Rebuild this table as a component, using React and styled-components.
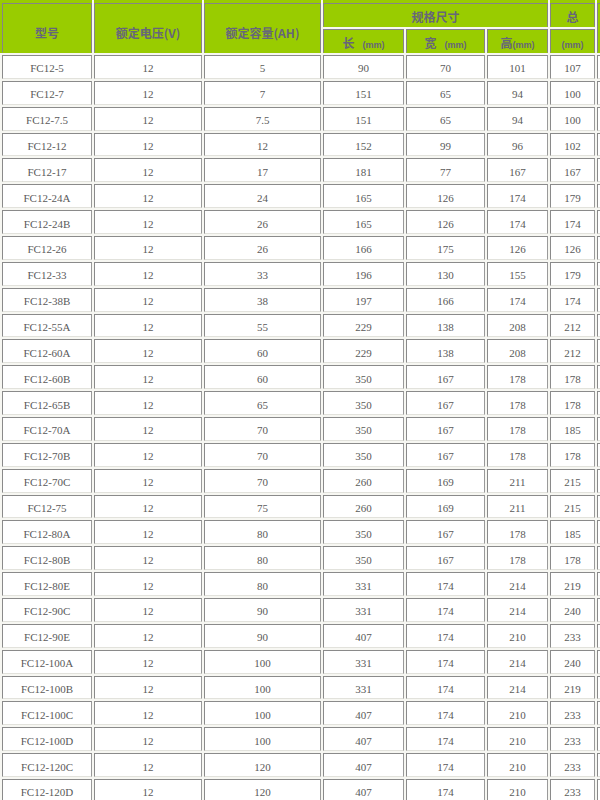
import React from "react";
import styled, { createGlobalStyle, css } from "styled-components";

const Global = createGlobalStyle`
  html, body {
    margin: 0;
    padding: 0;
    overflow: hidden;
    background: #f7f7f2;
  }
  body {
    font-family: "Liberation Serif", "Noto Sans CJK SC", serif;
  }
`;

const GREEN = "#99cc00";

const Table = styled.table`
  table-layout: fixed;
  width: 659px;
  margin: 1px 0 0 0;
  border-collapse: separate;
  border-spacing: 2px;
  background: #f7f7f2;
`;

const HeadRow = styled.tr`
  height: ${(p) => p.$h}px;
`;

const Row = styled.tr`
  height: 23.86px;
`;

const Th = styled.th`
  background: ${GREEN};
  border: 1px solid #858585;
  border-bottom-color: ${GREEN};
  padding: ${(p) => (p.$tall ? "8px" : "3px")} 0 0 0;
  text-align: center;
  vertical-align: middle;
  font-family: "Noto Sans CJK SC", "Liberation Sans", sans-serif;
  font-size: 12px;
  font-weight: 700;
  color: #66667a;
  white-space: nowrap;
  overflow: hidden;
  ${(p) =>
    p.$top &&
    css`
      box-shadow: 0 -3px 0 ${GREEN};
    `}
  ${(p) =>
    p.$first &&
    css`
      box-shadow: 0 -3px 0 ${GREEN}, -2px 0 0 ${GREEN}, -2px -3px 0 ${GREEN};
    `}
`;

const Unit = styled.span`
  font-family: "Liberation Sans", sans-serif;
  font-size: 9px;
  font-weight: 700;
  margin-left: ${(p) => p.$gap || 0}px;
`;

const Td = styled.td`
  border: 1px solid #8a8a8a;
  border-right-color: #9a9a9a;
  border-bottom-color: #e2e2dc;
  background: #ffffff;
  padding: 4px 0 0 0;
  text-align: center;
  vertical-align: middle;
  font-family: "Liberation Serif", serif;
  font-size: 11px;
  line-height: 13px;
  color: #5a5a5a;
  white-space: nowrap;
  overflow: hidden;
`;

const widths = [90, 108, 117, 81, 79, 61, 45, 60];

const rows = [
  ["FC12-5", 12, 5, 90, 70, 101, 107],
  ["FC12-7", 12, 7, 151, 65, 94, 100],
  ["FC12-7.5", 12, "7.5", 151, 65, 94, 100],
  ["FC12-12", 12, 12, 152, 99, 96, 102],
  ["FC12-17", 12, 17, 181, 77, 167, 167],
  ["FC12-24A", 12, 24, 165, 126, 174, 179],
  ["FC12-24B", 12, 26, 165, 126, 174, 174],
  ["FC12-26", 12, 26, 166, 175, 126, 126],
  ["FC12-33", 12, 33, 196, 130, 155, 179],
  ["FC12-38B", 12, 38, 197, 166, 174, 174],
  ["FC12-55A", 12, 55, 229, 138, 208, 212],
  ["FC12-60A", 12, 60, 229, 138, 208, 212],
  ["FC12-60B", 12, 60, 350, 167, 178, 178],
  ["FC12-65B", 12, 65, 350, 167, 178, 178],
  ["FC12-70A", 12, 70, 350, 167, 178, 185],
  ["FC12-70B", 12, 70, 350, 167, 178, 178],
  ["FC12-70C", 12, 70, 260, 169, 211, 215],
  ["FC12-75", 12, 75, 260, 169, 211, 215],
  ["FC12-80A", 12, 80, 350, 167, 178, 185],
  ["FC12-80B", 12, 80, 350, 167, 178, 178],
  ["FC12-80E", 12, 80, 331, 174, 214, 219],
  ["FC12-90C", 12, 90, 331, 174, 214, 240],
  ["FC12-90E", 12, 90, 407, 174, 210, 233],
  ["FC12-100A", 12, 100, 331, 174, 214, 240],
  ["FC12-100B", 12, 100, 331, 174, 214, 219],
  ["FC12-100C", 12, 100, 407, 174, 210, 233],
  ["FC12-100D", 12, 100, 407, 174, 210, 233],
  ["FC12-120C", 12, 120, 407, 174, 210, 233],
  ["FC12-120D", 12, 120, 407, 174, 210, 233],
];

export default function App() {
  return (
    <>
      <Global />
      <Table>
        <colgroup>
          {widths.map((w, i) => (
            <col key={i} style={{ width: w }} />
          ))}
        </colgroup>
        <thead>
          <HeadRow $h={24}>
            <Th rowSpan={2} $first $tall>型号</Th>
            <Th rowSpan={2} $top $tall>额定电压(V)</Th>
            <Th rowSpan={2} $top $tall>额定容量(AH)</Th>
            <Th colSpan={3} $top>规格尺寸</Th>
            <Th $top>总</Th>
            <Th rowSpan={2} $top $tall />
          </HeadRow>
          <HeadRow $h={24}>
            <Th>长<Unit $gap={8}>(mm)</Unit></Th>
            <Th>宽<Unit $gap={8}>(mm)</Unit></Th>
            <Th>高<Unit>(mm)</Unit></Th>
            <Th><Unit>(mm)</Unit></Th>
          </HeadRow>
        </thead>
        <tbody>
          {rows.map((r) => (
            <Row key={r[0]}>
              {r.map((v, i) => (
                <Td key={i}>{v}</Td>
              ))}
              <Td />
            </Row>
          ))}
        </tbody>
      </Table>
    </>
  );
}
